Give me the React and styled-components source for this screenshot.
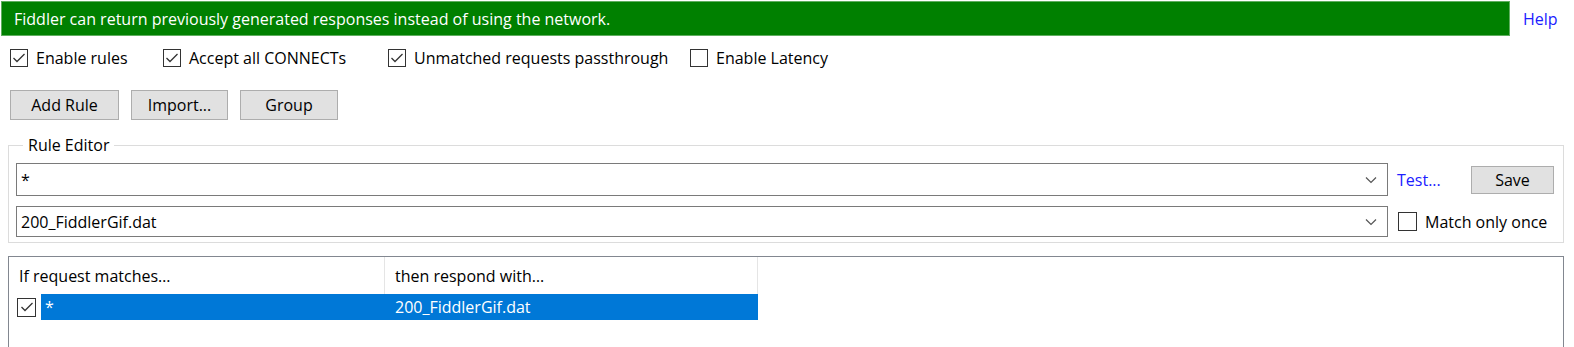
import React from "react";
import styled, { createGlobalStyle } from "styled-components";

const GlobalStyle = createGlobalStyle`
  html, body {
    margin: 0;
    padding: 0;
    background: #fff;
  }
  body {
    font-family: "Open Sans", "Noto Sans", sans-serif;
    font-size: 16px;
    color: #000;
  }
`;

const Page = styled.div`
  width: 1574px;
  height: 347px;
  overflow: hidden;
  background: #fff;
`;

const TopBar = styled.div`
  display: flex;
  align-items: center;
  padding-top: 1px;
`;

const Banner = styled.div`
  width: 1509px;
  height: 35px;
  margin-left: 1px;
  box-sizing: border-box;
  background: #008000;
  border: 1px solid #5fae5f;
  color: #fff;
  display: flex;
  align-items: center;
  padding-left: 12px;
`;

const LinkText = styled.span`
  color: #2020ff;
  cursor: pointer;
  margin-left: ${(p) => p.$ml || 0}px;
`;

const OptionsRow = styled.div`
  display: flex;
  align-items: center;
  height: 20px;
  margin-top: 12px;
  padding-left: 10px;
`;

const CheckItem = styled.label`
  display: flex;
  align-items: center;
  gap: 8px;
  width: ${(p) => (p.$w ? `${p.$w}px` : "auto")};
  flex-shrink: 0;
  white-space: nowrap;
`;

const Box = styled.span`
  width: ${(p) => p.$size || 18}px;
  height: ${(p) => p.$size || 18}px;
  box-sizing: border-box;
  border: 1px solid #333;
  background: #fff;
  display: inline-flex;
  align-items: center;
  justify-content: center;
  flex-shrink: 0;
`;

const ButtonRow = styled.div`
  display: flex;
  gap: 12px;
  margin-top: 22px;
  padding-left: 10px;
`;

const WinButton = styled.button`
  width: ${(p) => p.$w}px;
  height: ${(p) => p.$h || 30}px;
  box-sizing: border-box;
  background: #e1e1e1;
  border: 1px solid #adadad;
  font-family: inherit;
  font-size: 16px;
  color: #000;
  padding: 0;
  margin-left: ${(p) => (p.$push ? "auto" : "0")};
`;

const Group = styled.fieldset`
  margin: 15px 10px 0 8px;
  padding: 8px 9px 5px 7px;
  border: 1px solid #dcdcdc;
  min-width: 0;
`;

const Legend = styled.legend`
  margin-left: 7px;
  padding: 0 5px;
  line-height: 20px;
`;

const EditorGrid = styled.div`
  display: grid;
  grid-template-columns: 1372px 1fr;
  row-gap: 10px;
`;

const Combo = styled.div`
  height: ${(p) => p.$h || 32}px;
  box-sizing: border-box;
  border: 1px solid #7a7a7a;
  display: flex;
  align-items: center;
  padding: 0 10px 0 4px;
`;

const ComboText = styled.span`
  flex: 1;
`;

const SideCell = styled.div`
  display: flex;
  align-items: center;
  padding-left: ${(p) => p.$pl || 9}px;
`;

const ListView = styled.div`
  margin: 13px 10px 0 8px;
  height: 110px;
  border: 1px solid #828790;
`;

const HeaderRow = styled.div`
  display: grid;
  grid-template-columns: 376px 373px;
  height: 37px;
`;

const HeaderCell = styled.div`
  display: flex;
  align-items: center;
  padding-left: ${(p) => p.$pl || 10}px;
  border-right: 1px solid #e5e5e5;
`;

const ItemRow = styled.div`
  display: grid;
  grid-template-columns: 32px 344px 373px;
  height: 26px;
  align-items: stretch;
`;

const CheckCell = styled.div`
  display: flex;
  align-items: center;
  padding-left: 8px;
`;

const SelectedCell = styled.div`
  background: #0078d7;
  color: #fff;
  display: flex;
  align-items: center;
  padding-left: ${(p) => p.$pl || 4}px;
`;

function Check({ checked, size }) {
  return (
    <Box $size={size}>
      {checked && (
        <svg width="14" height="12" viewBox="0 0 14 12">
          <polyline points="1.5,6 5,9.5 12.5,2" fill="none" stroke="#333" strokeWidth="1.3" />
        </svg>
      )}
    </Box>
  );
}

function Chevron() {
  return (
    <svg width="12" height="8" viewBox="0 0 12 8">
      <polyline points="1,1.5 6,6.5 11,1.5" fill="none" stroke="#555" strokeWidth="1.2" />
    </svg>
  );
}

export default function App() {
  return (
    <Page>
      <GlobalStyle />
      <TopBar>
        <Banner>Fiddler can return previously generated responses instead of using the network.</Banner>
        <LinkText $ml={13}>Help</LinkText>
      </TopBar>

      <OptionsRow>
        <CheckItem $w={153}><Check checked />Enable rules</CheckItem>
        <CheckItem $w={225}><Check checked />Accept all CONNECTs</CheckItem>
        <CheckItem $w={302}><Check checked />Unmatched requests passthrough</CheckItem>
        <CheckItem><Check />Enable Latency</CheckItem>
      </OptionsRow>

      <ButtonRow>
        <WinButton $w={109}>Add Rule</WinButton>
        <WinButton $w={97}>Import...</WinButton>
        <WinButton $w={98}>Group</WinButton>
      </ButtonRow>

      <Group>
        <Legend>Rule Editor</Legend>
        <EditorGrid>
          <Combo $h={33}>
            <ComboText>*</ComboText>
            <Chevron />
          </Combo>
          <SideCell>
            <LinkText>Test...</LinkText>
            <WinButton $w={83} $h={28} $push>Save</WinButton>
          </SideCell>
          <Combo $h={31}>
            <ComboText>200_FiddlerGif.dat</ComboText>
            <Chevron />
          </Combo>
          <SideCell $pl={10}>
            <CheckItem><Check size={19} />Match only once</CheckItem>
          </SideCell>
        </EditorGrid>
      </Group>

      <ListView>
        <HeaderRow>
          <HeaderCell>If request matches…</HeaderCell>
          <HeaderCell>then respond with…</HeaderCell>
        </HeaderRow>
        <ItemRow>
          <CheckCell><Check checked size={19} /></CheckCell>
          <SelectedCell>*</SelectedCell>
          <SelectedCell $pl={10}>200_FiddlerGif.dat</SelectedCell>
        </ItemRow>
      </ListView>
    </Page>
  );
}
